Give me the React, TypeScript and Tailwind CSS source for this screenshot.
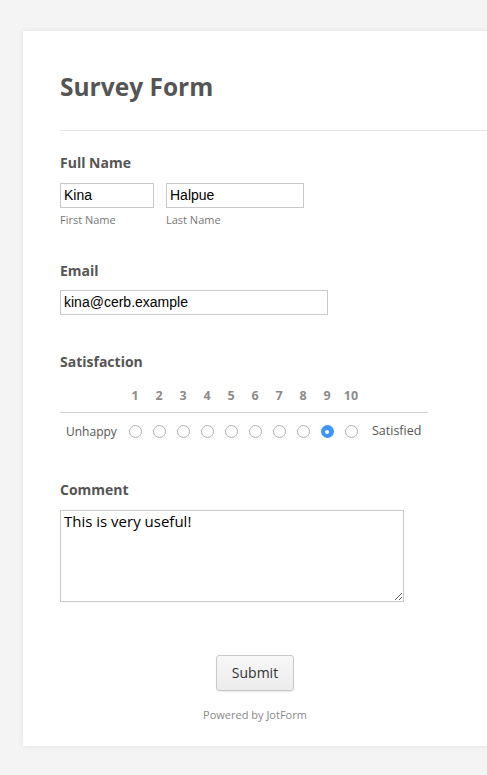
import React from "react";

const scale = [1, 2, 3, 4, 5, 6, 7, 8, 9, 10];

function Radio({ checked }: { checked?: boolean }) {
  if (checked) {
    return (
      <span className="flex h-[13px] w-[13px] items-center justify-center rounded-full bg-[#3d95f5]">
        <span className="h-[4px] w-[4px] rounded-full bg-white" />
      </span>
    );
  }
  return <span className="block h-[13px] w-[13px] rounded-full border border-[#b0b0b0] bg-white" />;
}

export default function App() {
  return (
    <div className="min-h-[775px] overflow-hidden bg-[#f4f4f4] pt-[31px] pl-[23px] font-['Open_Sans',sans-serif] text-[#555]">
      <div className="w-[500px] bg-white pt-[40px] pb-[24px] pl-[37px] shadow-[0_0_6px_rgba(0,0,0,0.08)]">
        {/* Header */}
        <h1 className="text-[24.5px] leading-[32px] font-bold">Survey Form</h1>
        <div className="mt-[27px] border-t border-[#e5e5e5]" />

        {/* Full Name */}
        <div className="mt-[22px] text-[14px] leading-[20px] font-bold">Full Name</div>
        <div className="mt-[9px] flex gap-[12px]">
          <div>
            <input
              defaultValue="Kina"
              className="h-[25px] w-[94px] border border-[#c8c8c8] px-[3px] font-['Liberation_Sans',sans-serif] text-[14px] text-black outline-none"
            />
            <div className="mt-[5px] text-[11px] leading-[14px] text-[#777]">First Name</div>
          </div>
          <div>
            <input
              defaultValue="Halpue"
              className="h-[25px] w-[138px] border border-[#c8c8c8] px-[3px] font-['Liberation_Sans',sans-serif] text-[14px] text-black outline-none"
            />
            <div className="mt-[5px] text-[11px] leading-[14px] text-[#777]">Last Name</div>
          </div>
        </div>

        {/* Email */}
        <div className="mt-[34px] text-[14px] leading-[20px] font-bold">Email</div>
        <input
          defaultValue="kina@cerb.example"
          className="mt-[9px] block h-[25px] w-[268px] border border-[#c8c8c8] px-[3px] font-['Liberation_Sans',sans-serif] text-[14px] text-black outline-none"
        />

        {/* Satisfaction */}
        <div className="mt-[37px] text-[14px] leading-[20px] font-bold">Satisfaction</div>
        <div className="mt-[16px] w-[368px]">
          <div className="flex h-[25px] items-start border-b border-[#d0d0d0]">
            <div className="w-[63px]" />
            {scale.map((n) => (
              <div key={n} className="w-[24px] text-center text-[12.5px] leading-[16px] font-bold text-[#8c8c8c]">
                {n}
              </div>
            ))}
          </div>
          <div className="flex h-[38px] items-center">
            <div className="w-[63px] pl-[6px] text-[12px]">Unhappy</div>
            {scale.map((n) => (
              <div key={n} className="flex w-[24px] justify-center">
                <Radio checked={n === 9} />
              </div>
            ))}
            <div className="pl-[9px] text-[12.5px]">Satisfied</div>
          </div>
        </div>

        {/* Comment */}
        <div className="mt-[29px] text-[14px] leading-[20px] font-bold">Comment</div>
        <textarea
          defaultValue="This is very useful!"
          className="mt-[10px] block h-[92px] w-[344px] border border-[#c8c8c8] px-[3px] py-[1px] text-[15px] leading-[19px] text-black outline-none"
        />

        {/* Submit */}
        <div className="w-[390px] pt-[53px] text-center">
          <button className="h-[36px] w-[78px] rounded-[3px] border border-[#c9c9c9] bg-gradient-to-b from-[#f7f7f7] to-[#ececec] text-[14px] text-[#333] shadow-[0_1px_1px_rgba(0,0,0,0.08)]">
            Submit
          </button>
          <div className="mt-[17px] text-[11px] leading-[14px] text-[#888]">Powered by JotForm</div>
        </div>
      </div>
    </div>
  );
}
